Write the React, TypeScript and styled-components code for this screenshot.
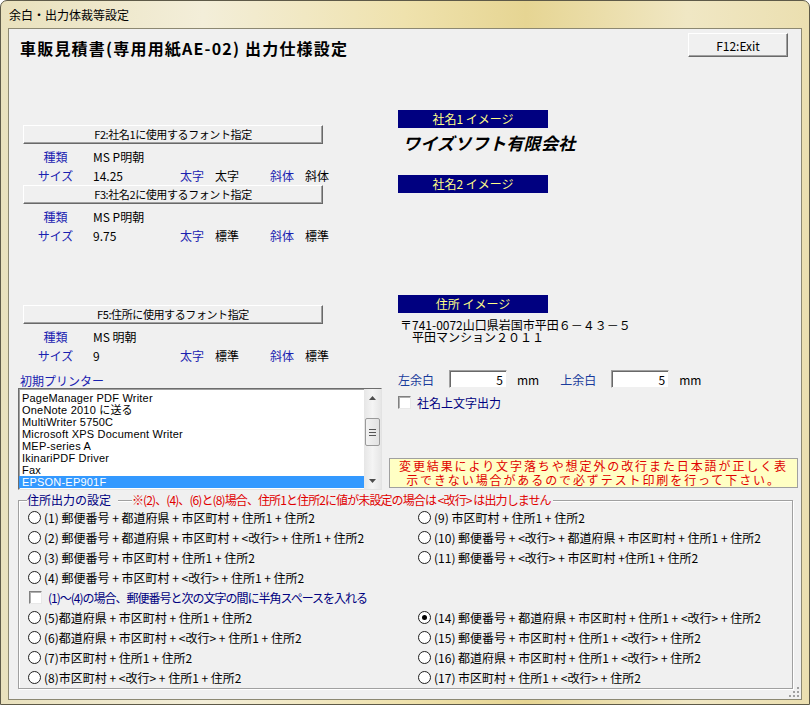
import styled, { createGlobalStyle } from "styled-components";

const GlobalStyle = createGlobalStyle`
  html, body {
    margin: 0;
    padding: 0;
    background: #ffffff;
  }
  body {
    font-family: "Noto Sans CJK JP", "Liberation Sans", sans-serif;
    font-size: 12px;
    color: #000;
  }
  * {
    box-sizing: border-box;
  }
`;

const Window = styled.div`
  width: 810px;
  height: 705px;
  display: flex;
  flex-direction: column;
  padding: 0 7px 4px 7px;
  border: 1px solid #5e5a48;
  border-radius: 7px 7px 0 0;
  background: linear-gradient(
    90deg,
    #e9e1bd 0%,
    #f3eed9 25%,
    #efe2ad 50%,
    #e6d593 65%,
    #f0e7c4 85%,
    #ebdfb0 100%
  );
  overflow: hidden;
`;

const TitleBar = styled.div`
  height: 27px;
  display: flex;
  align-items: center;
  padding-left: 1px;
  font-size: 12px;
  color: #000;
`;

const Client = styled.div`
  position: relative;
  flex: 1;
  display: flex;
  flex-direction: column;
  background: #f0f0f0;
  border: 1px solid #8c8872;
`;

const Header = styled.div`
  display: flex;
  justify-content: space-between;
  align-items: flex-start;
  padding: 4px 13px 0 11px;
  height: 28px;
`;

const Heading = styled.h1`
  margin: 5px 0 0 0;
  font-size: 16px;
  line-height: 20px;
  font-weight: bold;
  letter-spacing: 1.2px;
`;

const WinButton = styled.button<{ $width: number; $height: number }>`
  width: ${({ $width }) => $width}px;
  height: ${({ $height }) => $height}px;
  padding: 0;
  font-family: inherit;
  font-size: 12px;
  color: #000;
  background: #f0f0f0;
  border: 1px solid;
  border-color: #ffffff #696969 #696969 #ffffff;
  box-shadow: inset -1px -1px 0 #a0a0a0;
  text-align: center;
`;

const Body = styled.div`
  display: flex;
  gap: 7px;
  padding-right: 3px;
`;

const LeftColumn = styled.div`
  width: 373px;
  padding: 68px 0 0 9px;
  display: flex;
  flex-direction: column;
`;

const FontButton = styled(WinButton)<{ $top: number }>`
  margin: ${({ $top }) => $top}px 0 3px 5px;
  font-size: 11px;
  letter-spacing: -0.4px;
  line-height: 15px;
`;

const FontRow = styled.div`
  display: grid;
  grid-template-columns: 75px 87px 35px 55px 35px auto;
  height: 19px;
  align-items: center;
`;

const FieldLabel = styled.span<{ $center?: boolean }>`
  color: #1a22b0;
  text-align: ${({ $center }) => ($center ? "center" : "left")};
`;

const FieldValue = styled.span`
  color: #000;
  white-space: nowrap;
`;

const SectionLabel = styled.div`
  margin-top: 8px;
  height: 15px;
  line-height: 15px;
  padding-left: 2px;
  color: #1a22b0;
`;

const ListBox = styled.div`
  display: flex;
  width: 364px;
  height: 102px;
  background: #ffffff;
  border: 1px solid;
  border-color: #6d6d6d #e3e3e3 #e3e3e3 #6d6d6d;
  box-shadow: inset 1px 1px 0 #a0a0a0;
`;

const ListItems = styled.div`
  flex: 1;
  padding-top: 3px;
  overflow: hidden;
`;

const ListItem = styled.div<{ $selected?: boolean }>`
  height: 12px;
  line-height: 12px;
  padding-left: 3px;
  font-family: "Liberation Sans", "Noto Sans CJK JP", sans-serif;
  font-size: 11px;
  letter-spacing: 0.2px;
  white-space: nowrap;
  overflow: hidden;
  color: ${({ $selected }) => ($selected ? "#ffffff" : "#000000")};
  background: ${({ $selected }) => ($selected ? "#3399ff" : "transparent")};
`;

const ScrollBar = styled.div`
  width: 17px;
  display: flex;
  flex-direction: column;
  background: linear-gradient(90deg, #e6e6e6, #f4f4f4 50%, #e6e6e6);
`;

const ScrollButton = styled.div`
  height: 17px;
  display: flex;
  align-items: center;
  justify-content: center;
`;

const ScrollTrack = styled.div`
  flex: 1;
  padding-top: 12px;
  display: flex;
  justify-content: center;
`;

const ScrollThumb = styled.div`
  width: 15px;
  height: 28px;
  border: 1px solid #9a9a9a;
  border-radius: 2px;
  background: linear-gradient(90deg, #f2f2f2, #e2e2e2);
  display: flex;
  flex-direction: column;
  justify-content: center;
  align-items: center;
  gap: 2px;
`;

const Grip = styled.span`
  width: 7px;
  height: 1px;
  background: #555;
`;

const RightColumn = styled.div`
  flex: 1;
  padding-top: 53px;
  display: flex;
  flex-direction: column;
`;

const ImageBar = styled.div<{ $top: number }>`
  margin: ${({ $top }) => $top}px 0 0 9px;
  width: 150px;
  height: 18px;
  line-height: 18px;
  background: #000080;
  color: #ffff88;
  text-align: center;
  font-size: 12px;
`;

const CompanyName = styled.div`
  margin: 4px 0 0 14px;
  height: 22px;
  line-height: 22px;
  font-size: 17px;
  font-weight: bold;
  font-style: italic;
  letter-spacing: 0.3px;
`;

const AddressText = styled.div`
  margin: 6px 0 0 11px;
  font-size: 12px;
  line-height: 12px;
  white-space: pre;
`;

const MarginRow = styled.div`
  margin: 27px 0 0 9px;
  height: 18px;
  display: flex;
  align-items: center;
`;

const MarginLabel = styled.span<{ $gap: number }>`
  color: #1a3c9c;
  width: 51px;
  margin-left: ${({ $gap }) => $gap}px;
  font-size: 12px;
`;

const NumberBox = styled.input`
  width: 58px;
  height: 18px;
  padding: 0 3px 0 0;
  text-align: right;
  font-family: inherit;
  font-size: 12px;
  background: #ffffff;
  border: 1px solid;
  border-color: #a0a0a0 #f0f0f0 #f0f0f0 #a0a0a0;
  box-shadow: inset 1px 1px 0 #696969;
  outline: none;
`;

const Unit = styled.span`
  margin-left: 10px;
  font-size: 12px;
`;

const CheckRow = styled.div<{ $top?: number; $left?: number; $tight?: boolean }>`
  margin: ${({ $top }) => $top ?? 0}px 0 0 ${({ $left }) => $left ?? 0}px;
  height: ${({ $top }) => ($top ? 16 : 20)}px;
  display: flex;
  align-items: center;
  gap: 6px;
  color: #000080;
  white-space: nowrap;
  letter-spacing: ${({ $tight }) => ($tight ? "-1px" : "0")};
`;

const CheckBox = styled.span`
  width: 13px;
  height: 13px;
  flex: none;
  background: #ffffff;
  border: 1px solid;
  border-color: #808080 #e8e8e8 #e8e8e8 #808080;
  box-shadow: inset 1px 1px 0 #b0b0b0;
`;

const Notice = styled.div`
  margin-top: 48px;
  height: 30px;
  padding-top: 0;
  background: #ffffc4;
  border: 1px solid #a0a0a0;
  color: #e00000;
  font-size: 12px;
  letter-spacing: 1.9px;
  line-height: 14px;
  text-align: center;
  white-space: nowrap;
`;

const GroupArea = styled.div`
  padding: 10px 8px 0 9px;
`;

const GroupBox = styled.div`
  position: relative;
  height: 189px;
  border: 1px solid #a0a0a0;
  box-shadow: inset 1px 1px 0 #ffffff, 1px 1px 0 #ffffff;
  padding: 6px 0 0 9px;
  display: flex;
`;

const GroupLegend = styled.span<{ $left: number; $color: string; $tight?: boolean }>`
  position: absolute;
  top: -8px;
  left: ${({ $left }) => $left}px;
  height: 14px;
  line-height: 14px;
  padding: 0 2px 0 0;
  background: #f0f0f0;
  color: ${({ $color }) => $color};
  white-space: nowrap;
  letter-spacing: ${({ $tight }) => ($tight ? "-0.9px" : "0")};
`;

const GroupColumn = styled.div<{ $width?: number }>`
  width: ${({ $width }) => ($width ? `${$width}px` : "auto")};
  display: flex;
  flex-direction: column;
`;

const OptionRow = styled.div`
  height: 20px;
  display: flex;
  align-items: center;
  white-space: nowrap;
`;

const Radio = styled.span<{ $checked?: boolean }>`
  position: relative;
  flex: none;
  width: 13px;
  height: 13px;
  margin-right: 3px;
  border-radius: 50%;
  border: 1px solid #1e1e1e;
  background: #ffffff;
  &::after {
    content: "";
    display: ${({ $checked }) => ($checked ? "block" : "none")};
    position: absolute;
    left: 3px;
    top: 3px;
    width: 5px;
    height: 5px;
    border-radius: 50%;
    background: #000;
  }
`;

const RowSpacer = styled.div`
  height: 40px;
`;

const SizeGrip = styled.svg`
  position: absolute;
  right: 1px;
  bottom: 1px;
`;

const fontBlocks = [
  {
    key: "F2",
    label: "F2:社名1に使用するフォント指定",
    font: "MS P明朝",
    size: "14.25",
    bold: "太字",
    italic: "斜体",
    top: 0,
  },
  {
    key: "F3",
    label: "F3:社名2に使用するフォント指定",
    font: "MS P明朝",
    size: "9.75",
    bold: "標準",
    italic: "標準",
    top: 0,
  },
  {
    key: "F5",
    label: "F5:住所に使用するフォント指定",
    font: "MS 明朝",
    size: "9",
    bold: "標準",
    italic: "標準",
    top: 60,
  },
];

const printers = [
  "PageManager PDF Writer",
  "OneNote 2010 に送る",
  "MultiWriter 5750C",
  "Microsoft XPS Document Writer",
  "MEP-series A",
  "IkinariPDF Driver",
  "Fax",
  "EPSON-EP901F",
];

const leftTop = [
  "(1) 郵便番号 + 都道府県 + 市区町村 + 住所1 + 住所2",
  "(2) 郵便番号 + 都道府県 + 市区町村 + <改行> + 住所1 + 住所2",
  "(3) 郵便番号 + 市区町村 + 住所1 + 住所2",
  "(4) 郵便番号 + 市区町村 + <改行> + 住所1 + 住所2",
];

const leftBottom = [
  "(5)都道府県 + 市区町村 + 住所1 + 住所2",
  "(6)都道府県 + 市区町村 + <改行> + 住所1 + 住所2",
  "(7)市区町村 + 住所1 + 住所2",
  "(8)市区町村 + <改行> + 住所1 + 住所2",
];

const rightTop = [
  "(9) 市区町村 + 住所1 + 住所2",
  "(10) 郵便番号 + <改行> + 都道府県 + 市区町村 + 住所1 + 住所2",
  "(11) 郵便番号 + <改行> + 市区町村 +住所1 + 住所2",
];

const rightBottom = [
  "(14) 郵便番号 + 都道府県 + 市区町村 + 住所1 + <改行> + 住所2",
  "(15) 郵便番号 + 市区町村 + 住所1 + <改行> + 住所2",
  "(16) 都道府県 + 市区町村 + 住所1 + <改行> + 住所2",
  "(17) 市区町村 + 住所1 + <改行> + 住所2",
];

const Option = ({ text, checked }: { text: string; checked?: boolean }) => (
  <OptionRow>
    <Radio $checked={checked} />
    {text}
  </OptionRow>
);

export default function App() {
  return (
    <>
      <GlobalStyle />
      <Window>
        <TitleBar>余白・出力体裁等設定</TitleBar>
        <Client>
          <Header>
            <Heading>車販見積書(専用用紙AE-02) 出力仕様設定</Heading>
            <WinButton $width={100} $height={24}>
              F12:Exit
            </WinButton>
          </Header>

          <Body>
            <LeftColumn>
              {fontBlocks.map((b) => (
                <div key={b.key}>
                  <FontButton $top={b.top} $width={300} $height={19}>
                    {b.label}
                  </FontButton>
                  <FontRow>
                    <FieldLabel $center>種類</FieldLabel>
                    <FieldValue>{b.font}</FieldValue>
                  </FontRow>
                  <FontRow>
                    <FieldLabel $center>サイズ</FieldLabel>
                    <FieldValue>{b.size}</FieldValue>
                    <FieldLabel>太字</FieldLabel>
                    <FieldValue>{b.bold}</FieldValue>
                    <FieldLabel>斜体</FieldLabel>
                    <FieldValue>{b.italic}</FieldValue>
                  </FontRow>
                </div>
              ))}
              <SectionLabel>初期プリンター</SectionLabel>
              <ListBox>
                <ListItems>
                  {printers.map((p, i) => (
                    <ListItem key={p} $selected={i === printers.length - 1}>
                      {p}
                    </ListItem>
                  ))}
                </ListItems>
                <ScrollBar>
                  <ScrollButton>
                    <svg width="7" height="4" viewBox="0 0 7 4">
                      <path d="M0 4 L3.5 0 L7 4 Z" fill="#4d4d4d" />
                    </svg>
                  </ScrollButton>
                  <ScrollTrack>
                    <ScrollThumb>
                      <Grip />
                      <Grip />
                      <Grip />
                    </ScrollThumb>
                  </ScrollTrack>
                  <ScrollButton>
                    <svg width="7" height="4" viewBox="0 0 7 4">
                      <path d="M0 0 L3.5 4 L7 0 Z" fill="#4d4d4d" />
                    </svg>
                  </ScrollButton>
                </ScrollBar>
              </ListBox>
            </LeftColumn>

            <RightColumn>
              <ImageBar $top={0}>社名1 イメージ</ImageBar>
              <CompanyName>ワイズソフト有限会社</CompanyName>
              <ImageBar $top={21}>社名2 イメージ</ImageBar>
              <ImageBar $top={102}>住所 イメージ</ImageBar>
              <AddressText>
                {"〒741-0072山口県岩国市平田６－４３－５\n　平田マンション２０１１"}
              </AddressText>
              <MarginRow>
                <MarginLabel $gap={0}>左余白</MarginLabel>
                <NumberBox readOnly value="5" />
                <Unit>mm</Unit>
                <MarginLabel $gap={21}>上余白</MarginLabel>
                <NumberBox readOnly value="5" />
                <Unit>mm</Unit>
              </MarginRow>
              <CheckRow $top={6} $left={9}>
                <CheckBox />
                社名上文字出力
              </CheckRow>
              <Notice>
                変更結果により文字落ちや想定外の改行また日本語が正しく表
                <br />
                示できない場合があるので必ずテスト印刷を行って下さい。
              </Notice>
            </RightColumn>
          </Body>

          <GroupArea>
            <GroupBox>
              <GroupLegend $left={8} $color="#000080">
                住所出力の設定&nbsp;&nbsp;
              </GroupLegend>
              <GroupLegend $left={113} $color="#e00000" $tight>
                ※(2)、(4)、(6)と(8)場合、住所1と住所2に値が未設定の場合は {"<改行>"} は出力しません
              </GroupLegend>
              <GroupColumn $width={390}>
                {leftTop.map((t) => (
                  <Option key={t} text={t} />
                ))}
                <CheckRow $left={1} $tight>
                  <CheckBox />
                  (1)～(4)の場合、郵便番号と次の文字の間に半角スペースを入れる
                </CheckRow>
                {leftBottom.map((t) => (
                  <Option key={t} text={t} />
                ))}
              </GroupColumn>
              <GroupColumn>
                {rightTop.map((t) => (
                  <Option key={t} text={t} />
                ))}
                <RowSpacer />
                {rightBottom.map((t, i) => (
                  <Option key={t} text={t} checked={i === 0} />
                ))}
              </GroupColumn>
            </GroupBox>
          </GroupArea>

          <SizeGrip width="12" height="12" viewBox="0 0 12 12">
            <g fill="#a0a0a0">
              <rect x="9" y="1" width="2" height="2" />
              <rect x="5" y="5" width="2" height="2" />
              <rect x="9" y="5" width="2" height="2" />
              <rect x="1" y="9" width="2" height="2" />
              <rect x="5" y="9" width="2" height="2" />
              <rect x="9" y="9" width="2" height="2" />
            </g>
          </SizeGrip>
        </Client>
      </Window>
    </>
  );
}
